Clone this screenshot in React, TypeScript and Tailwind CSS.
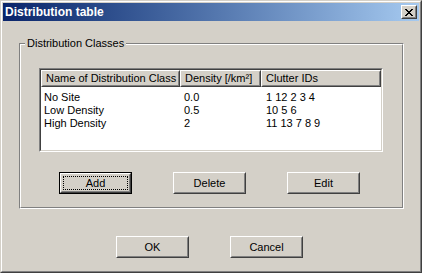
const rows = [
  { name: "No Site", density: "0.0", clutter: "1 12 2 3 4" },
  { name: "Low Density", density: "0.5", clutter: "10 5 6" },
  { name: "High Density", density: "2", clutter: "11 13 7 8 9" },
];

const font = { fontFamily: '"Liberation Sans", Arial, sans-serif' };

function Button({ label, isDefault }: { label: string; isDefault?: boolean }) {
  if (isDefault) {
    return (
      <div className="w-[73px] h-[22px] border border-black">
        <div className="h-full border border-t-white border-l-white border-r-[#404040] border-b-[#404040]">
          <div className="h-full border border-t-[#d4d0c8] border-l-[#d4d0c8] border-r-[#808080] border-b-[#808080] p-[1px]">
            <div className="h-full border border-dotted border-black flex items-center justify-center text-[11px] text-black">
              {label}
            </div>
          </div>
        </div>
      </div>
    );
  }
  return (
    <div className="w-[73px] h-[22px] border border-t-white border-l-white border-r-[#404040] border-b-[#404040]">
      <div className="h-full border border-t-[#d4d0c8] border-l-[#d4d0c8] border-r-[#808080] border-b-[#808080] flex items-center justify-center text-[11px] text-black">
        {label}
      </div>
    </div>
  );
}

function HeaderCell({ label, width }: { label: string; width: string }) {
  return (
    <div className={`${width} h-[17px] border border-t-white border-l-white border-r-[#404040] border-b-[#404040]`}>
      <div className="h-full border border-t-[#d4d0c8] border-l-[#d4d0c8] border-r-[#808080] border-b-[#808080] bg-[#d4d0c8] pl-[3px] flex items-center text-[11px] text-black whitespace-nowrap overflow-hidden">
        {label}
      </div>
    </div>
  );
}

export default function App() {
  return (
    <div style={font} className="w-[422px] h-[273px] bg-[#d4d0c8] border border-t-[#d4d0c8] border-l-[#d4d0c8] border-r-[#404040] border-b-[#404040]">
      <div className="h-full border border-t-white border-l-white border-r-[#808080] border-b-[#808080] p-[1px] flex flex-col">
        {/* title bar */}
        <div className="h-[18px] bg-gradient-to-r from-[#0a246a] to-[#a6caf0] flex items-center pl-[2px] pr-[2px]">
          <span className="flex-1 text-white font-bold text-[12px] leading-none">Distribution table</span>
          <div className="w-[16px] h-[14px] border border-t-white border-l-white border-r-[#404040] border-b-[#404040]">
            <div className="h-full border border-t-[#d4d0c8] border-l-[#d4d0c8] border-r-[#808080] border-b-[#808080] bg-[#d4d0c8] flex items-center justify-center">
              <svg width="8" height="7" viewBox="0 0 8 7" shapeRendering="crispEdges">
                <path d="M0 0h2v1h-2z M6 0h2v1h-2z M1 1h2v1h-2z M5 1h2v1h-2z M2 2h4v1h-4z M3 3h2v1h-2z M2 4h4v1h-4z M1 5h2v1h-2z M5 5h2v1h-2z M0 6h2v1h-2z M6 6h2v1h-2z" fill="#000" />
              </svg>
            </div>
          </div>
        </div>

        {/* group box */}
        <div className="relative mt-[22px] ml-[16px] w-[385px] h-[166px] border border-t-[#808080] border-l-[#808080] border-r-white border-b-white">
          <span className="absolute -top-[8px] left-[5px] bg-[#d4d0c8] px-[2px] text-[11px] leading-[14px] text-black">
            Distribution Classes
          </span>
          <div className="h-full border border-t-white border-l-white border-r-[#808080] border-b-[#808080] pt-[23px] pl-[18px] flex flex-col">
            {/* list view */}
            <div className="w-[344px] h-[84px] border border-t-[#808080] border-l-[#808080] border-r-white border-b-white">
              <div className="h-full border border-t-[#404040] border-l-[#404040] border-r-[#d4d0c8] border-b-[#d4d0c8] bg-white flex flex-col">
                <div className="flex">
                  <HeaderCell label="Name of Distribution Class" width="w-[139px]" />
                  <HeaderCell label="Density [/km²]" width="w-[81px]" />
                  <HeaderCell label="Clutter IDs" width="w-[120px]" />
                </div>
                <div className="pt-[4px] flex flex-col">
                  {rows.map((r) => (
                    <div key={r.name} className="flex h-[13px] items-center text-[11px] text-black leading-none">
                      <span className="w-[139px] pl-[3px]">{r.name}</span>
                      <span className="w-[81px] pl-[4px]">{r.density}</span>
                      <span className="w-[120px] pl-[5px]">{r.clutter}</span>
                    </div>
                  ))}
                </div>
              </div>
            </div>

            {/* action buttons */}
            <div className="flex gap-[41px] mt-[20px] ml-[20px]">
              <Button label="Add" isDefault />
              <Button label="Delete" />
              <Button label="Edit" />
            </div>
          </div>
        </div>

        {/* dialog buttons */}
        <div className="flex gap-[41px] mt-[27px] ml-[113px]">
          <Button label="OK" />
          <Button label="Cancel" />
        </div>
      </div>
    </div>
  );
}
